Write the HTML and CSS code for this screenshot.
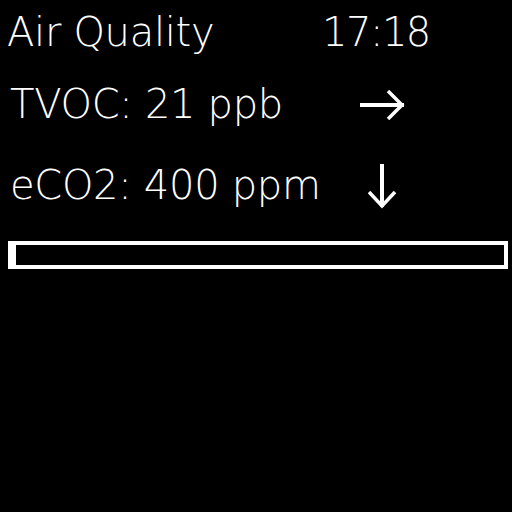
FILE: index.html
```html
<!DOCTYPE html>
<html>
<head>
<meta charset="utf-8">
<link rel="stylesheet" href="styles.css">
</head>
<body>
<div class="screen">
  <div class="row row-title">
    <span class="label">Air Quality</span>
    <span class="time">17:18</span>
  </div>
  <div class="row row-tvoc">
    <span class="label label-tvoc">TVOC: 21 ppb</span>
    <svg class="arrow arrow-right" width="46" height="30" viewBox="0 0 46 30">
      <rect x="0" y="13" width="44" height="4" fill="#fff"/>
      <polyline points="28,1 42,15 28,29" fill="none" stroke="#fff" stroke-width="3.5"/>
    </svg>
  </div>
  <div class="row row-eco2">
    <span class="label label-eco2">eCO2: 400 ppm</span>
    <svg class="arrow arrow-down" width="30" height="46" viewBox="0 0 30 46">
      <rect x="12" y="0" width="4" height="43" fill="#fff"/>
      <polyline points="1,28 14,42 27,28" fill="none" stroke="#fff" stroke-width="3.5"/>
    </svg>
  </div>
  <div class="bar">
    <div class="bar-fill"></div>
  </div>
</div>
</body>
</html>
```

FILE: styles.css
```css
html, body {
  margin: 0;
  padding: 0;
  background: #000;
}
.screen {
  width: 512px;
  height: 512px;
  background: #000;
  color: #fff;
  font-family: "DejaVu Sans", sans-serif;
  font-weight: 200;
  font-size: 40px;
  box-sizing: border-box;
  padding-top: 12px;
  display: flex;
  flex-direction: column;
}
.row {
  display: flex;
  align-items: center;
  height: 41px;
  line-height: 41px;
  white-space: nowrap;
}
.row-tvoc {
  margin-top: 31px;
}
.row-eco2 {
  margin-top: 40px;
}
.label {
  display: block;
  width: 315px;
  padding-left: 7px;
  letter-spacing: -0.3px;
}
.label-tvoc {
  padding-left: 10px;
  width: 350px;
}
.label-eco2 {
  padding-left: 10px;
  width: 358px;
}
.time {
  letter-spacing: -1.5px;
}
.arrow {
  display: block;
}
.arrow-down {
  margin-top: 2px;
}
.bar {
  margin: 35px 0 0 8px;
  width: 500px;
  height: 28px;
  box-sizing: border-box;
  border: 4px solid #fff;
  display: flex;
}
.bar-fill {
  width: 4px;
  height: 100%;
  background: #fff;
}
```
